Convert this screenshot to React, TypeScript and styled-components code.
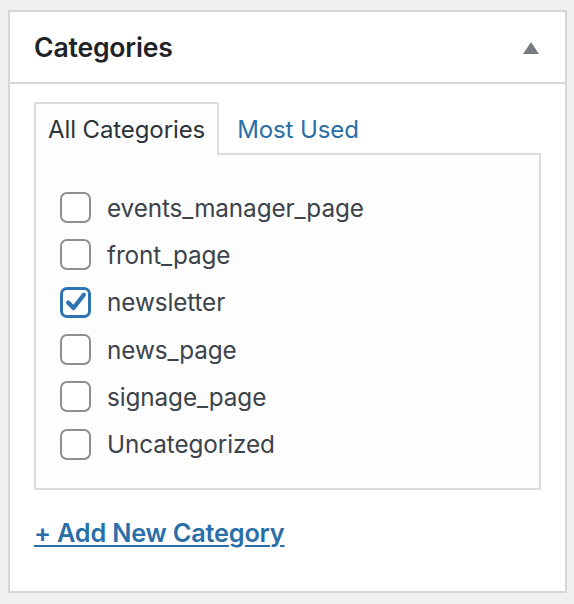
import React from "react";
import styled, { createGlobalStyle } from "styled-components";

const GlobalStyle = createGlobalStyle`
  html, body {
    margin: 0;
    padding: 0;
    background: #f0f0f1;
  }
  body {
    font-family: Inter, "Noto Sans", "Liberation Sans", sans-serif;
  }
`;

const Page = styled.div`
  padding: 10px 7px 8px 8px;
`;

const Box = styled.section`
  background: #ffffff;
  border: 2px solid #d4d6d9;
`;

const Header = styled.div`
  height: 70px;
  display: flex;
  align-items: center;
  justify-content: space-between;
  padding: 0 26px 0 24px;
  border-bottom: 2px solid #d4d6d9;
`;

const Title = styled.h2`
  margin: 0;
  font-size: 26.6px;
  font-weight: 600;
  color: #1d2327;
  letter-spacing: -0.2px;
`;

const Toggle = styled.span`
  width: 0;
  height: 0;
  border-left: 8px solid transparent;
  border-right: 8px solid transparent;
  border-bottom: 12px solid #787c82;
  margin-top: 2px;
`;

const Inside = styled.div`
  padding: 18px 24px 43px 24px;
`;

const Tabs = styled.ul`
  list-style: none;
  margin: 0 0 -2px 0;
  padding: 0;
  display: flex;
  align-items: stretch;
  position: relative;
`;

const Tab = styled.li<{ $active?: boolean }>`
  height: 53px;
  display: flex;
  align-items: center;
  padding: 0 12px;
  font-size: 24px;
  letter-spacing: -0.1px;
  box-sizing: border-box;
  margin-right: 4px;
  border: 2px solid ${(p) => (p.$active ? "#dcdcde" : "transparent")};
  border-bottom: none;
  background: ${(p) => (p.$active ? "#fdfdfd" : "transparent")};
  color: ${(p) => (p.$active ? "#2c3338" : "#2a6fa8")};
`;

const TabPanel = styled.div`
  border: 2px solid #dcdcde;
  background: #fdfdfd;
  padding: 29px 24px 20px 24px;
`;

const List = styled.ul`
  list-style: none;
  margin: 0;
  padding: 0;
`;

const Row = styled.li`
  height: 47.3px;
  display: flex;
  align-items: center;
  gap: 16px;
  font-size: 24.3px;
  color: #3c434a;
  letter-spacing: -0.1px;
`;

const Check = styled.span<{ $checked?: boolean }>`
  width: 31px;
  height: 31px;
  box-sizing: border-box;
  border-radius: 7px;
  background: #ffffff;
  border: ${(p) => (p.$checked ? "3.5px solid #2e74b0" : "2px solid #8c8f94")};
  display: flex;
  align-items: center;
  justify-content: center;
  flex-shrink: 0;
`;

const AddLink = styled.a`
  display: inline-block;
  margin-top: 27px;
  font-size: 25.3px;
  font-weight: 600;
  color: #2a6fa8;
  text-decoration: underline;
  text-decoration-thickness: 2px;
  text-underline-offset: 3px;
  letter-spacing: -0.2px;
`;

const categories = [
  { name: "events_manager_page", checked: false },
  { name: "front_page", checked: false },
  { name: "newsletter", checked: true },
  { name: "news_page", checked: false },
  { name: "signage_page", checked: false },
  { name: "Uncategorized", checked: false },
];

const Tick = () => (
  <svg width="24" height="24" viewBox="0 0 20 20">
    <path
      d="M3.5 10.5 L8 15 L16.5 4"
      fill="none"
      stroke="#2e74b0"
      strokeWidth="3.6"
      strokeLinecap="round"
      strokeLinejoin="round"
    />
  </svg>
);

export default function App() {
  return (
    <>
      <GlobalStyle />
      <Page>
        <Box>
          <Header>
            <Title>Categories</Title>
            <Toggle />
          </Header>
          <Inside>
            <Tabs>
              <Tab $active>All Categories</Tab>
              <Tab>Most Used</Tab>
            </Tabs>
            <TabPanel>
              <List>
                {categories.map((c) => (
                  <Row key={c.name}>
                    <Check $checked={c.checked}>{c.checked && <Tick />}</Check>
                    {c.name}
                  </Row>
                ))}
              </List>
            </TabPanel>
            <AddLink href="#">+ Add New Category</AddLink>
          </Inside>
        </Box>
      </Page>
    </>
  );
}
